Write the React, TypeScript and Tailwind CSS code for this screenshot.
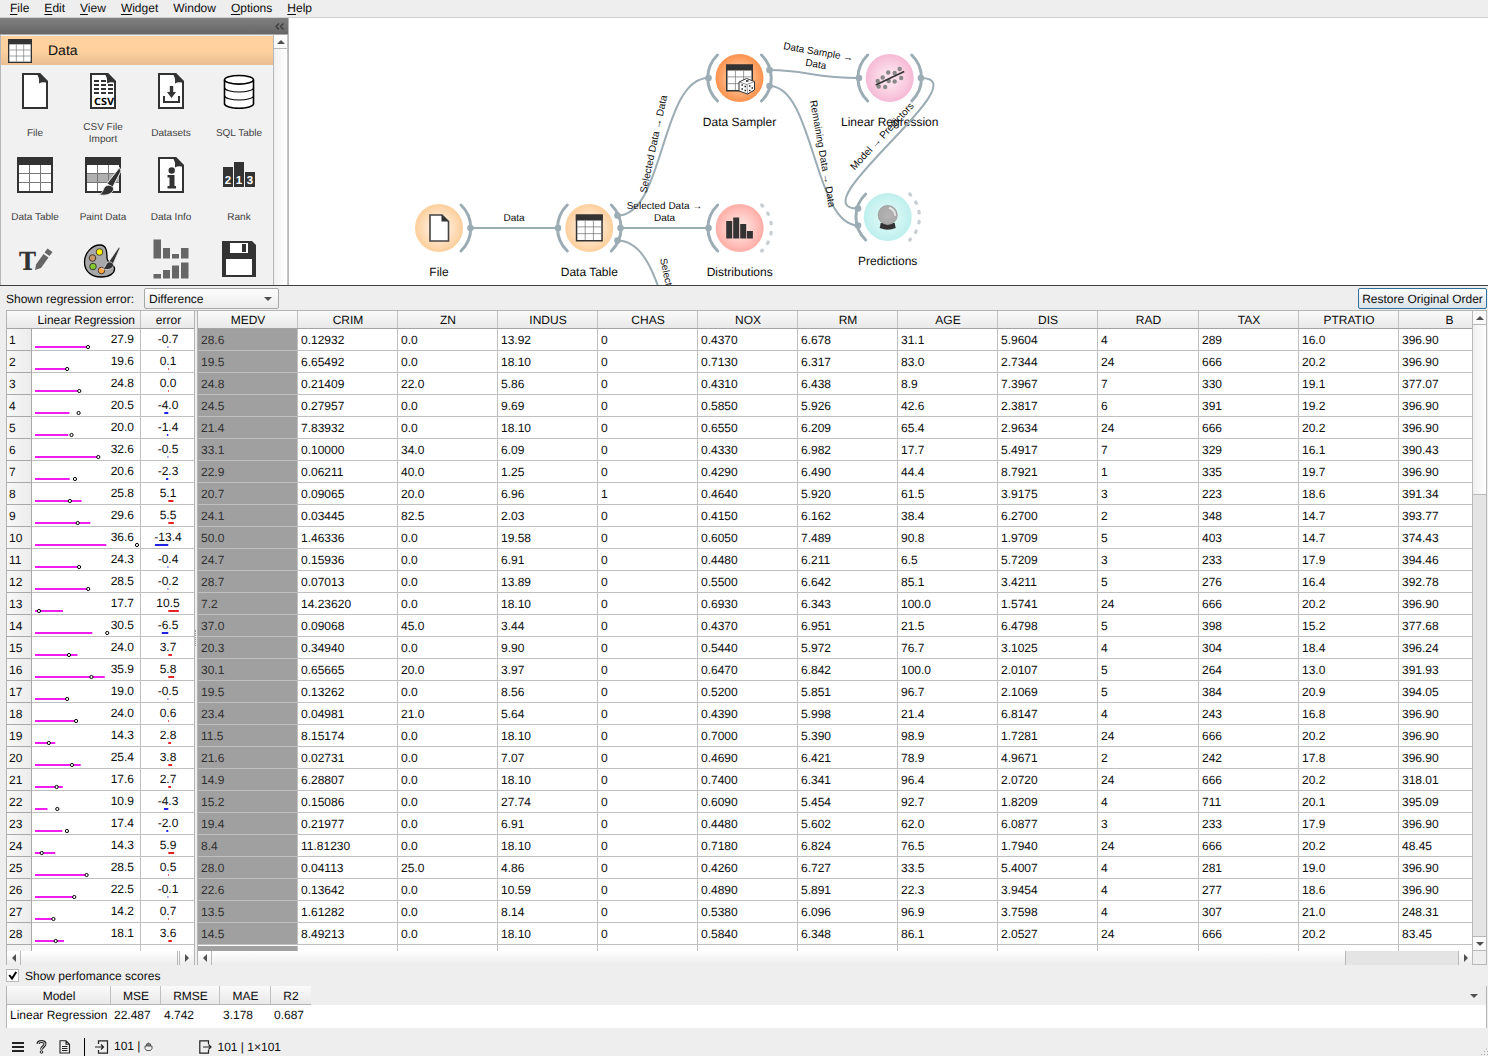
import React from "react";

const RAW = `27.9 -0.7 28.6 0.12932 0.0 13.92 0 0.4370 6.678 31.1 5.9604 4 289 16.0 396.90
19.6 0.1 19.5 6.65492 0.0 18.10 0 0.7130 6.317 83.0 2.7344 24 666 20.2 396.90
24.8 0.0 24.8 0.21409 22.0 5.86 0 0.4310 6.438 8.9 7.3967 7 330 19.1 377.07
20.5 -4.0 24.5 0.27957 0.0 9.69 0 0.5850 5.926 42.6 2.3817 6 391 19.2 396.90
20.0 -1.4 21.4 7.83932 0.0 18.10 0 0.6550 6.209 65.4 2.9634 24 666 20.2 396.90
32.6 -0.5 33.1 0.10000 34.0 6.09 0 0.4330 6.982 17.7 5.4917 7 329 16.1 390.43
20.6 -2.3 22.9 0.06211 40.0 1.25 0 0.4290 6.490 44.4 8.7921 1 335 19.7 396.90
25.8 5.1 20.7 0.09065 20.0 6.96 1 0.4640 5.920 61.5 3.9175 3 223 18.6 391.34
29.6 5.5 24.1 0.03445 82.5 2.03 0 0.4150 6.162 38.4 6.2700 2 348 14.7 393.77
36.6 -13.4 50.0 1.46336 0.0 19.58 0 0.6050 7.489 90.8 1.9709 5 403 14.7 374.43
24.3 -0.4 24.7 0.15936 0.0 6.91 0 0.4480 6.211 6.5 5.7209 3 233 17.9 394.46
28.5 -0.2 28.7 0.07013 0.0 13.89 0 0.5500 6.642 85.1 3.4211 5 276 16.4 392.78
17.7 10.5 7.2 14.23620 0.0 18.10 0 0.6930 6.343 100.0 1.5741 24 666 20.2 396.90
30.5 -6.5 37.0 0.09068 45.0 3.44 0 0.4370 6.951 21.5 6.4798 5 398 15.2 377.68
24.0 3.7 20.3 0.34940 0.0 9.90 0 0.5440 5.972 76.7 3.1025 4 304 18.4 396.24
35.9 5.8 30.1 0.65665 20.0 3.97 0 0.6470 6.842 100.0 2.0107 5 264 13.0 391.93
19.0 -0.5 19.5 0.13262 0.0 8.56 0 0.5200 5.851 96.7 2.1069 5 384 20.9 394.05
24.0 0.6 23.4 0.04981 21.0 5.64 0 0.4390 5.998 21.4 6.8147 4 243 16.8 396.90
14.3 2.8 11.5 8.15174 0.0 18.10 0 0.7000 5.390 98.9 1.7281 24 666 20.2 396.90
25.4 3.8 21.6 0.02731 0.0 7.07 0 0.4690 6.421 78.9 4.9671 2 242 17.8 396.90
17.6 2.7 14.9 6.28807 0.0 18.10 0 0.7400 6.341 96.4 2.0720 24 666 20.2 318.01
10.9 -4.3 15.2 0.15086 0.0 27.74 0 0.6090 5.454 92.7 1.8209 4 711 20.1 395.09
17.4 -2.0 19.4 0.21977 0.0 6.91 0 0.4480 5.602 62.0 6.0877 3 233 17.9 396.90
14.3 5.9 8.4 11.81230 0.0 18.10 0 0.7180 6.824 76.5 1.7940 24 666 20.2 48.45
28.5 0.5 28.0 0.04113 25.0 4.86 0 0.4260 6.727 33.5 5.4007 4 281 19.0 396.90
22.5 -0.1 22.6 0.13642 0.0 10.59 0 0.4890 5.891 22.3 3.9454 4 277 18.6 396.90
14.2 0.7 13.5 1.61282 0.0 8.14 0 0.5380 6.096 96.9 3.7598 4 307 21.0 248.31
18.1 3.6 14.5 8.49213 0.0 18.10 0 0.5840 6.348 86.1 2.0527 24 666 20.2 83.45`;
const ROWS = RAW.split("\n").map((r) => r.split(" "));
const COLS = ["MEDV", "CRIM", "ZN", "INDUS", "CHAS", "NOX", "RM", "AGE", "DIS", "RAD", "TAX", "PTRATIO", "B"];
const MAIN_GRID = "grid grid-cols-[100px_100px_100px_100px_100px_100px_100px_100px_100px_101px_100px_100px_101px]";
const LEFT_GRID = "grid grid-cols-[25px_109px_54px]";
const HEAD = "bg-linear-to-b from-[#fafafa] to-[#e9e9e9]";

function Arrow({ dir }: { dir: "up" | "down" | "left" | "right" }) {
  const pts = { up: "0,5 8,5 4,1", down: "0,1 8,1 4,5", left: "5,0 5,8 1,4", right: "1,0 1,8 5,4" }[dir];
  const v = dir === "up" || dir === "down";
  return (
    <svg width={v ? 8 : 6} height={v ? 6 : 8} className="block shrink-0">
      <polygon points={pts} fill="#505050" />
    </svg>
  );
}

function FileShape({ children }: { children?: React.ReactNode }) {
  return (
    <svg width="36" height="36" viewBox="0 0 36 36" className="block">
      <path d="M6 1H22.500L30 8.500V35H6Z" fill="#fff" stroke="#333" strokeWidth="2" />
      <path d="M19 0H23L31 8.500V10.500Q26 8 22 10.500Q22.800 4 19 0Z" fill="#333" />
      {children}
    </svg>
  );
}

function TableShape({ band }: { band?: boolean }) {
  return (
    <g>
      <rect x="1" y="1" width="34" height="34" fill="#fff" stroke="#333" strokeWidth="2" />
      <rect x="0" y="0" width="36" height="8" fill="#333" />
      {band && <rect x="2" y="17" width="32" height="8" fill="#b0b0b0" />}
      <path d="M12.500 8V34M23.500 8V34M2 16.500H34M2 25.500H34" stroke="#777" strokeWidth="1" fill="none" />
    </g>
  );
}

function TableIcon({ size = 36 }: { size?: number }) {
  return (
    <svg width={size} height={size} viewBox="0 0 36 36" className="block">
      <TableShape />
    </svg>
  );
}

const Brush = () => (
  <g>
    <path d="M34.500 10.500L22 26.500L27.500 30.500L36 14Z" fill="#333" stroke="#f1f1f1" strokeWidth="1" />
    <path d="M13.500 37.500C18 36.500 17.500 33.500 19.500 30.500C21.500 27 27 28 28.500 31C29.500 35 23 40 13.500 37.500Z" fill="#333" stroke="#f1f1f1" strokeWidth=".8" />
  </g>
);

const WIDGETS: { label: string; icon: React.ReactNode }[] = [
  { label: "File", icon: <FileShape /> },
  {
    label: "CSV File Import",
    icon: (
      <FileShape>
        <path d="M9 8H21M9 12H28M9 16H28M9 20H28" stroke="#333" strokeWidth="2" strokeDasharray="5 2" />
        <text x="19" y="32" textAnchor="middle" fontSize="10" fontWeight="bold" fontFamily="Noto Sans" fill="#000" textLength="20" lengthAdjust="spacingAndGlyphs">CSV</text>
      </FileShape>
    ),
  },
  {
    label: "Datasets",
    icon: (
      <FileShape>
        <path d="M11 23V29H26V23" fill="none" stroke="#333" strokeWidth="2" />
        <path d="M16.800 13H20.200V19H23L18.500 25L14 19H16.800Z" fill="#333" />
      </FileShape>
    ),
  },
  {
    label: "SQL Table",
    icon: (
      <svg width="36" height="36" viewBox="0 0 36 36" className="block">
        <path d="M3.500 7V31C4 33 10 35.300 18 35.300S32.500 33 32.500 31V7" fill="#fff" stroke="#000" strokeWidth="1.600" />
        <ellipse cx="18" cy="6.800" rx="14.500" ry="4.300" fill="#fff" stroke="#000" strokeWidth="1.600" />
        <path d="M3.500 15C4 17 10 19 18 19S32.500 17 32.500 15M3.500 23C4 25 10 27 18 27S32.500 25 32.500 23" fill="none" stroke="#000" strokeWidth="1.100" />
      </svg>
    ),
  },
  { label: "Data Table", icon: <TableIcon /> },
  {
    label: "Paint Data",
    icon: (
      <svg width="36" height="40" viewBox="0 0 36 40" className="block">
        <TableShape band />
        <Brush />
      </svg>
    ),
  },
  {
    label: "Data Info",
    icon: (
      <FileShape>
        <circle cx="18.700" cy="13.500" r="3.200" fill="#333" />
        <path d="M14.500 18H21.500V29H23V31.500H14.500V29H16.500V20.500H14.500Z" fill="#333" />
      </FileShape>
    ),
  },
  {
    label: "Rank",
    icon: (
      <svg width="36" height="36" viewBox="0 0 36 36" className="block">
        <path d="M2 10H12V30H2ZM13 5H23V30H13ZM24 15H34V30H24Z" fill="#333" />
        <g fontFamily="Liberation Sans" fontWeight="bold" fontSize="11.500" fill="#fff" textAnchor="middle">
          <text x="7" y="27">2</text>
          <text x="18" y="27">1</text>
          <text x="29" y="27">3</text>
        </g>
      </svg>
    ),
  },
  {
    label: "",
    icon: (
      <svg width="36" height="40" viewBox="0 0 36 40" className="block">
        <text x="2" y="29" fontFamily="DejaVu Serif" fontWeight="bold" fontSize="25" fill="#333" textLength="17" lengthAdjust="spacingAndGlyphs">T</text>
        <path d="M18 29L19 23.500L26.500 13L31.500 16.500L24 27Z" fill="#666" />
        <path d="M27.500 11.500L30.500 7.500L35.500 11L32.500 15Z" fill="#666" />
      </svg>
    ),
  },
  {
    label: "",
    icon: (
      <svg width="36" height="40" viewBox="0 0 36 40" className="block overflow-visible">
        <path d="M15 4C7 4 -.5 12 -.5 21C-.5 31 7 36 16 36C25 36 30 32 29.500 27C29 23 22 22 22 17C22 12 22 4 15 4Z" fill="#a8a8aa" stroke="#000" strokeWidth="1.300" />
        <circle cx="14.500" cy="11" r="3.300" fill="#ffee00" stroke="#222" strokeWidth=".8" />
        <circle cx="7.500" cy="17" r="3.300" fill="#c9986a" stroke="#222" strokeWidth=".8" />
        <circle cx="8" cy="25.500" r="3.300" fill="#84c830" stroke="#222" strokeWidth=".8" />
        <circle cx="16.500" cy="29.500" r="3.300" fill="#ffa643" stroke="#222" strokeWidth=".8" />
        <path d="M34 6L24 20.500L28 23L35 7Z" fill="#333" stroke="#eee" strokeWidth=".7" />
        <path d="M16.500 27.500C20.500 27.500 20 24.500 22 22C24.500 19.500 28.500 21.500 28.500 24.500C27.500 28.500 22 29.500 16.500 27.500Z" fill="#333" stroke="#eee" strokeWidth=".7" />
      </svg>
    ),
  },
  {
    label: "",
    icon: (
      <svg width="36" height="40" viewBox="0 0 36 40" className="block overflow-visible">
        <path d="M.5 -1.500H8V17.500H.5ZM10 7H17V17.500H10ZM19 13H26V17.500H19ZM28 7H35.500V17.500H28ZM.5 33H8V37.500H.5ZM10 29H17V37.500H10ZM19 24.500H26V37.500H19ZM28 21.500H35.500V37.500H28Z" fill="#666" />
      </svg>
    ),
  },
  {
    label: "",
    icon: (
      <svg width="36" height="36" viewBox="0 0 36 36" className="block">
        <path d="M1 0H31L35 4V36H1Z" fill="#333" />
        <path d="M9 2H27V12H9ZM5 18H31V34H5Z" fill="#fff" />
        <rect x="21" y="3" width="4" height="8" fill="#333" />
      </svg>
    ),
  },
];

const ARC = "M22 -23A32 32 0 0 1 22 23";

function Node({ x, y, label, fill, left, right, dashed, children }: {
  x: number; y: number; label: string; fill: string; left?: boolean; right?: boolean; dashed?: boolean; children: React.ReactNode;
}) {
  return (
    <g transform={`translate(${x} ${y})`}>
      <circle r="24" fill={`url(#${fill})`} />
      <g fill="none" stroke="#9cacb4" strokeWidth="3" strokeLinecap="round">
        {left && <path d={ARC} transform="scale(-1 1)" />}
        {right && <path d={ARC} />}
        {dashed && <path d={ARC} stroke="#c9d0d4" strokeDasharray="1.500 8.500" strokeWidth="3.300" />}
      </g>
      {children}
      <text y="48" textAnchor="middle" fontSize="12">{label}</text>
    </g>
  );
}

function Canvas() {
  const grads = [
    ["gData", "#ffeedb", "#fdd09f"],
    ["gSampler", "#ffc8a0", "#fd9552"],
    ["gModel", "#fce0ec", "#f6bcd7"],
    ["gVis", "#ffdcd8", "#ffb0aa"],
    ["gEval", "#dcf8f6", "#bff0ee"],
  ];
  const dots = [[470.5, 228], [558, 228], [617.5, 215.5], [620.5, 228], [617.5, 240.5], [708.5, 78], [769.5, 70], [769.5, 86], [859, 78], [921, 78], [708.5, 228], [858, 208.5], [858, 225.5]];
  return (
    <svg width="1199" height="267" viewBox="289 18 1199 267" className="block bg-white" fontFamily="Liberation Sans, Arial, sans-serif" fill="#0c0c0c">
      <defs>
        {grads.map(([id, a, b]) => (
          <radialGradient id={id} key={id}>
            <stop offset="0" stopColor={a} />
            <stop offset=".3" stopColor={a} />
            <stop offset=".95" stopColor={b} />
          </radialGradient>
        ))}
        <radialGradient id="ball" cx=".5" cy=".5" r=".5">
          <stop offset="0" stopColor="#b4b4b4" />
          <stop offset=".85" stopColor="#aaa" />
          <stop offset="1" stopColor="#999" />
        </radialGradient>
      </defs>
      <Node x={439} y={228} label="File" fill="gData" right>
        <path d="M-9 -13H3L9.500 -6.500V13H-9Z" fill="#fff" stroke="#444" strokeWidth="1.600" />
        <path d="M2.500 -13.500L10 -6.500H2.500Z" fill="#333" />
      </Node>
      <Node x={589.3} y={228} label="Data Table" fill="gData" left right>
        <g transform="translate(-13.500 -13.500) scale(.75)"><TableShape /></g>
      </Node>
      <Node x={739.5} y={78} label="Data Sampler" fill="gSampler" left right>
        <g transform="translate(-13.500 -13.500) scale(.75)"><TableShape /></g>
        <path d="M7 .5L15 3.500V12L8 16L-.5 13V4Z" fill="#fff" stroke="#333" strokeWidth="1" />
        <path d="M-.5 4L7.500 6.500L15 3.500M7.500 6.500L8 16" stroke="#666" strokeWidth=".7" fill="none" />
        <path d="M2 7h1.500M5 8.500h1.500M2 11h1.500M5 12.500h1.500M9.500 8h1.500M12 10h1.500M9.500 12.500h1.500M6.500 3h2.500" stroke="#222" strokeWidth="1.500" />
      </Node>
      <Node x={889.7} y={78} label="Linear Regression" fill="gModel" left right>
        <g fill="#888">
          {[[-12, 3], [-11, 8.5], [-7, -0.5], [-4.5, 9], [-1.5, -5.5], [-1, 3], [5, 3.5], [5, -5], [10, -9], [11.5, 0]].map(([cx, cy]) => (
            <circle key={`${cx},${cy}`} cx={cx} cy={cy} r="2.200" />
          ))}
        </g>
        <path d="M-14 7L14.500 -6.500" stroke="#333" strokeWidth="1.600" />
      </Node>
      <Node x={739.7} y={228} label="Distributions" fill="gVis" left dashed>
        <path d="M-13.500 -7H-7.500V10.500H-13.500ZM-6.500 -10.500H-.5V10.500H-6.500ZM.5 -4H6.500V10.500H.5ZM7.200 3H13.200V10.500H7.200Z" fill="#333" />
      </Node>
      <Node x={887.7} y={217} label="Predictions" fill="gEval" left dashed>
        <path d="M-7 6H7L8 11Q0 14.500 -8 11Z" fill="#333" />
        <circle cy="-2" r="10" fill="url(#ball)" />
        <path d="M2 -9Q7 -7 7.500 -2" fill="none" stroke="#e4e4e4" strokeWidth="2" strokeLinecap="round" />
      </Node>
      <g fill="none" stroke="#9cacb4" strokeWidth="2">
        <path d="M470.500 228H558M620.500 228H708.500" />
        <path d="M617.500 215.500C665 215.500 660 78 708.500 78" />
        <path d="M617.500 240.500C669 240.500 665 378 708.500 378" />
        <path d="M769.500 70C806 70 814 78 859 78" />
        <path d="M769.500 86C814 86 814 225.500 858 225.500" />
        <path d="M921 78C982 78 797 208.500 858 208.500" />
      </g>
      <g fill="#9cacb4">
        {dots.map(([cx, cy]) => <circle key={`${cx},${cy}`} cx={cx} cy={cy} r="3.300" />)}
      </g>
      <g fontSize="10">
        <text x="514" y="221" textAnchor="middle">Data</text>
        <text x="664.500" y="209" textAnchor="middle">Selected Data →</text>
        <text x="664.500" y="221" textAnchor="middle">Data</text>
        <text transform="translate(646.400 193.500) rotate(-78)">Selected Data → Data</text>
        <text transform="translate(783 49) rotate(10)">Data Sample →</text>
        <text transform="translate(805 65.500) rotate(10)">Data</text>
        <text transform="translate(810 101) rotate(80)">Remaining Data → Data</text>
        <text transform="translate(854.500 170.500) rotate(-47)">Model → Predictors</text>
        <text transform="translate(660 259) rotate(78)">Select</text>
      </g>
    </svg>
  );
}

function Toolbox() {
  return (
    <div className="flex w-[289px] shrink-0 flex-col border-r border-[#b4b8ba] bg-[#f1f1f1]">
      <div className="flex h-[17px] shrink-0 items-center justify-end border-b border-[#aaa] bg-linear-to-b from-[#808080] to-[#666] pr-1">
        <svg width="9" height="7" className="block">
          <path d="M4 .5L1 3.500L4 6.500M8.500 .5L5.500 3.500L8.500 6.500" fill="none" stroke="#3c3c3c" strokeWidth="1.400" />
        </svg>
      </div>
      <div className="flex min-h-0 flex-1 border-l border-[#b4b8ba]">
        <div className="w-[273px] shrink-0 overflow-hidden border-r border-[#b4b8ba] pt-px">
          <div className="flex h-[29px] items-center bg-linear-to-b from-[#ffd19f] from-50% to-[#e9bf92] pl-[7px] text-[14px]">
            <TableIcon size={24} />
            <span className="ml-4">Data</span>
          </div>
          <div className="grid grid-cols-4 pt-2">
            {WIDGETS.map((w, i) => (
              <div key={i} className="flex h-[84px] flex-col items-center text-[10px] leading-3 text-[#404040]">
                <div className="h-[47px]">{w.icon}</div>
                <div className="flex h-[27px] w-14 items-center justify-center text-center">{w.label}</div>
              </div>
            ))}
          </div>
        </div>
        <div className="flex flex-1 flex-col border-r border-[#c4c4c4] bg-linear-to-r from-[#f0f0f0] to-white">
          <div className="flex h-[14px] items-center justify-center border-b border-[#b8b8b8] bg-[#fcfcfc]"><Arrow dir="up" /></div>
        </div>
      </div>
    </div>
  );
}

function PredictionTable() {
  return (
    <div className="flex w-[189px] shrink-0 flex-col border-x border-[#b4b4b4]">
      <div className={`${LEFT_GRID} ${HEAD} h-[18px] shrink-0 grid-rows-[17px] border-b border-[#a4a4a4] leading-[19px]`}>
        <span />
        <span className="whitespace-nowrap border-r border-[#c0c0c0] pr-[5px] text-right">Linear Regression</span>
        <span className="pl-px text-center">error</span>
      </div>
      <div className="min-h-0 flex-1 overflow-hidden bg-white">
        {ROWS.map((r, i) => {
          const pred = +r[0], err = +r[1], actual = +r[2];
          const w = Math.max(Math.abs(err), 0.7);
          return (
            <div key={i} className={`${LEFT_GRID} h-[22px] grid-rows-[22px]`}>
              <span className="border-r border-b border-[#a8a8a8] bg-linear-to-r from-[#f8f8f8] to-[#ececec] pl-0.5 leading-[22px]">{i + 1}</span>
              <span className="relative border-r border-b border-[#c0c0c0] pr-1.5 text-right leading-5">
                {r[0]}
                <svg width="108" height="21" className="absolute top-0 left-0">
                  <rect x="3" y="17" width={pred * 2.29 - 12.5} height="2" fill="#f01cf0" />
                  <circle cx={actual * 2.29 - 9.5} cy="18" r="1.600" fill="#fff" stroke="#000" />
                </svg>
              </span>
              <span className="relative border-b border-[#c0c0c0] text-center leading-5">
                {r[1]}
                <svg width="54" height="21" className="absolute top-0 left-0">
                  <rect x={err < 0 ? 27.3 - w : 27.3} y="17" width={w} height="2" fill={err < 0 ? "#2222e6" : "#e62222"} />
                </svg>
              </span>
            </div>
          );
        })}
        <div className={`${LEFT_GRID} h-[22px]`}>
          <span className="border-r border-[#a8a8a8] bg-[#f4f4f4]" />
          <span className="border-r border-[#c0c0c0]" />
        </div>
      </div>
      <div className="flex h-[14px] shrink-0 bg-linear-to-b from-white to-[#ececec]">
        <div className="flex w-[14px] items-center justify-center border-r border-[#b8b8b8]"><Arrow dir="left" /></div>
        <div className="flex-1 border-r border-[#b8b8b8]" />
        <div className="ml-px flex w-[15px] items-center justify-center border-l border-[#b8b8b8]"><Arrow dir="right" /></div>
      </div>
    </div>
  );
}

function DataTable() {
  return (
    <div className="flex min-w-0 flex-1 border-l border-[#b4b4b4]">
      <div className="flex w-[1274px] shrink-0 flex-col">
        <div className="h-[640px] overflow-hidden bg-white">
          <div className={`${MAIN_GRID} ${HEAD} h-[18px] w-[1302px] grid-rows-[17px] border-b border-[#a4a4a4] text-center leading-[19px]`}>
            {COLS.map((c) => <span key={c} className="border-r border-[#c0c0c0] pl-px">{c}</span>)}
          </div>
          {ROWS.map((r, i) => (
            <div key={i} className={`${MAIN_GRID} h-[22px] w-[1302px] grid-rows-[22px] leading-[22px]`}>
              {r.slice(2).map((v, j) => (
                <span key={j} className={j === 0 ? "border-r border-b border-[#c0c0c0] bg-[#a0a0a0] pl-[3px] text-[#303030]" : "border-r border-b border-[#c0c0c0] pl-[3px]"}>{v}</span>
              ))}
            </div>
          ))}
          <div className={`${MAIN_GRID} h-[22px] w-[1302px]`}>
            {COLS.map((c, j) => <span key={c} className={j === 0 ? "mt-px border-r border-[#c0c0c0] bg-[#a0a0a0]" : "border-r border-[#c0c0c0]"} />)}
          </div>
        </div>
        <div className="flex h-[14px] bg-linear-to-b from-white to-[#ececec]">
          <div className="flex w-[14px] items-center justify-center border-r border-[#b8b8b8]"><Arrow dir="left" /></div>
          <div className="flex-1" />
          <div className="w-[114px] border-x border-[#b8b8b8] bg-[#e4e4e4]" />
          <div className="flex w-[13px] items-center justify-center"><Arrow dir="right" /></div>
        </div>
      </div>
      <div className="flex w-[15px] flex-col border-x border-[#b8b8b8]">
        <div className="flex h-[14px] shrink-0 items-center justify-center border-b border-[#b8b8b8] bg-[#fafafa]"><Arrow dir="up" /></div>
        <div className="h-[170px] shrink-0 border-b border-[#b8b8b8] bg-linear-to-r from-[#f0f0f0] to-white" />
        <div className="flex-1 bg-[#e4e4e4]" />
        <div className="flex h-[15px] shrink-0 items-center justify-center border-y border-[#b8b8b8] bg-[#fafafa]"><Arrow dir="down" /></div>
        <div className="h-[14px] shrink-0 border-b border-[#b8b8b8] bg-[#eee]" />
      </div>
    </div>
  );
}

function Scores() {
  const grid = "grid grid-cols-[104px_50px_59px_51px_40px]";
  return (
    <div className="mr-px ml-1.5 h-[42px] border-x border-[#b4b4b4] bg-white">
      <div className="flex h-[19px] items-center justify-between bg-[#eee] pr-2">
        <div className={`${grid} ${HEAD} h-[19px] grid-rows-[18px] border-b border-[#b4b4b4] text-center leading-[21px]`}>
          {["Model", "MSE", "RMSE", "MAE"].map((h) => <span key={h} className="border-r border-[#c0c0c0] pl-px">{h}</span>)}
          <span>R2</span>
        </div>
        <Arrow dir="down" />
      </div>
      <div className={`${grid} leading-5`}>
        {["Linear Regression", "22.487", "4.742", "3.178", "0.687"].map((v) => <span key={v} className="whitespace-nowrap pl-[3px]">{v}</span>)}
      </div>
    </div>
  );
}

export default function App() {
  return (
    <div className="flex h-[1056px] w-[1488px] flex-col overflow-hidden bg-[#eee] font-['Liberation_Sans',Arial,sans-serif] text-[12px] text-[#0c0c0c] [text-rendering:geometricPrecision]">
      <div className="flex h-[18px] shrink-0 gap-[15px] border-b border-[#d0d0d0] pl-2.5 leading-4">
        {["File", "Edit", "View", "Widget", "Window", "Options", "Help"].map((m) => (
          <span key={m}>{m === "Window" ? m : <><span className="underline underline-offset-2">{m[0]}</span>{m.slice(1)}</>}</span>
        ))}
      </div>
      <div className="flex h-[267px] shrink-0">
        <Toolbox />
        <Canvas />
      </div>
      <div className="flex h-[25px] shrink-0 items-center justify-between border-t border-[#404040] pt-px pr-px pl-1.5">
        <div className="flex items-center">
          <span className="w-[138px]">Shown regression error:</span>
          <div className="flex h-[21px] w-[135px] items-center justify-between rounded-xs border border-[#a8a8a8] bg-linear-to-b from-[#fdfdfd] to-[#ececec] pr-1.5 pl-1">
            Difference <Arrow dir="down" />
          </div>
        </div>
        <div className="flex h-[21px] w-[129px] items-center justify-center rounded-xs border border-[#30709c] bg-linear-to-b from-[#fcfcfc] to-[#dbe4ea] whitespace-nowrap">Restore Original Order</div>
      </div>
      <div className="mr-px ml-1.5 flex h-[655px] shrink-0 border-t border-[#b4b4b4]">
        <PredictionTable />
        <div className="flex w-0.5 shrink-0 items-center"><div className="h-4 border-l border-dotted border-[#999]" /></div>
        <DataTable />
      </div>
      <div className="flex h-[21px] shrink-0 items-center pl-1.5">
        <svg width="13" height="13" className="block">
          <rect x=".5" y=".5" width="12" height="12" fill="#fff" stroke="#b8b8b8" />
          <path d="M3.200 6L6 9.500L10.200 3" fill="none" stroke="#000" strokeWidth="2" />
        </svg>
        <span className="ml-1.5">Show perfomance scores</span>
      </div>
      <Scores />
      <div className="flex flex-1 items-center pt-[9px] pl-3">
        <svg width="12" height="12" className="block"><path d="M0 2H12M0 6H12M0 10H12" stroke="#222" strokeWidth="2" /></svg>
        <svg width="11" height="14" className="ml-3 block">
          <path d="M2 4C2 .8 9 .8 9 4C9 6.500 5.500 6.500 5.500 9.500" fill="none" stroke="#222" strokeWidth="3" />
          <path d="M2 4C2 .8 9 .8 9 4C9 6.500 5.500 6.500 5.500 9.200" fill="none" stroke="#eee" strokeWidth="1" />
          <circle cx="5.500" cy="12" r="1.300" fill="#eee" stroke="#222" />
        </svg>
        <svg width="12" height="14" className="ml-3 block">
          <path d="M1 .8H7L10.500 4.300V13H1ZM7 .8V4.300H10.500M3 6.500H8.500M3 8.500H8.500M3 10.500H8.500" fill="none" stroke="#222" strokeWidth="1.100" />
        </svg>
        <div className="ml-[13px] h-[18px] w-px bg-black" />
        <svg width="14" height="14" className="ml-2.5 block">
          <path d="M3.500 4V.8H12.500V13.200H3.500V10M0 7H8M6 4.500L8.500 7L6 9.500" fill="none" stroke="#222" strokeWidth="1.200" />
        </svg>
        <span className="mb-px ml-[5px]">101 |</span>
        <svg width="9" height="9" className="mb-px ml-1 block">
          <path d="M2.500 8.500L1 6.500V4H8V6.500L6.500 8.500ZM2.500 4V2H4V1H5V2H6.500V4M4 2V4M5 2V4" fill="none" stroke="#444" strokeWidth=".9" />
        </svg>
        <svg width="14" height="14" className="ml-[46px] block">
          <path d="M9.500 4V.8H.8V13.200H9.500V10M4 7H12M9.500 4.500L12 7L9.500 9.500" fill="none" stroke="#222" strokeWidth="1.200" />
        </svg>
        <span className="ml-1">101 | 1×101</span>
        <svg width="8" height="8" className="ml-auto self-end">
          <path d="M6 1h1M4 3.500h1M7 3.500h1M1 6.500h1M4 6.500h1M7 6.500h1" stroke="#aaa" />
        </svg>
      </div>
    </div>
  );
}
